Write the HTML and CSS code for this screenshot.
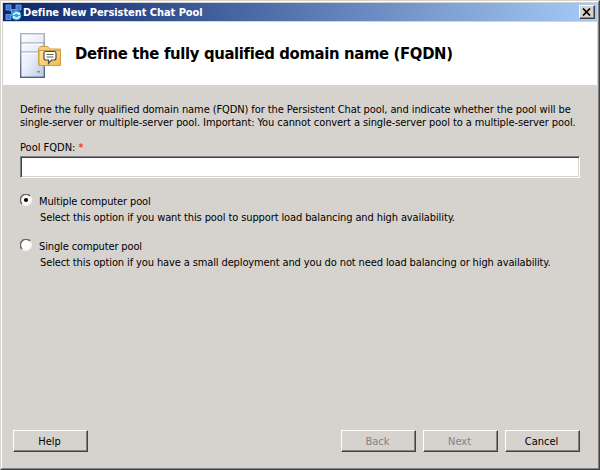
FILE: index.html
```html
<!DOCTYPE html>
<html lang="en">
<head>
<meta charset="utf-8">
<title>Define New Persistent Chat Pool</title>
<link rel="stylesheet" href="styles.css">
</head>
<body>
<div class="window"><div class="frame">
  <div class="titlebar">
    <svg class="app-icon" width="17" height="17" viewBox="0 0 17 17">
      <path d="M3.500 4L8.500 9L13.500 4M8.500 9L3.500 13" fill="none" stroke="#5d9ae6" stroke-width="1.600"/>
      <g fill="#4378d2" stroke="#6da5ee" stroke-width=".8">
        <rect x="1" y="1" width="5" height="5"/><rect x="11" y="1" width="5" height="5"/><rect x="1" y="10.500" width="5" height="5"/>
        <rect x="6.500" y="5.500" width="4" height="4"/>
      </g>
      <circle cx="11.500" cy="11.500" r="4.900" fill="#2fa6dc"/>
      <path d="M8.500 11A3.100 3.100 0 0 1 13.500 9.500M14.500 12A3.100 3.100 0 0 1 9.500 13.500" fill="none" stroke="#fff" stroke-width="1.500"/>
      <path d="M12.300 10.800H15V8ZM10.700 12.300H8V15Z" fill="#fff"/>
    </svg>
    <span class="title">Define New Persistent Chat Pool</span>
    <button class="close" aria-label="Close"><svg width="9" height="8" viewBox="0 0 9 8"><path d="M1 .5L8 7.500M8 .5L1 7.500" stroke="#000" stroke-width="1.700"/></svg></button>
  </div>
  <header class="header">
    <svg class="server-icon" width="43" height="47" viewBox="0 0 43 47">
      <defs>
        <linearGradient id="server" x1="0" y1="0" x2="1" y2="1"><stop offset="0" stop-color="#fff"/><stop offset=".5" stop-color="#e9eefb"/><stop offset="1" stop-color="#b9c6e8"/></linearGradient>
        <linearGradient id="edge" x1="0" y1="0" x2="0" y2="1"><stop offset="0" stop-color="#adb3c1"/><stop offset="1" stop-color="#53627c"/></linearGradient>
        <linearGradient id="folder" x1="0" y1="0" x2="1" y2="1"><stop offset="0" stop-color="#ffe7a2"/><stop offset="1" stop-color="#eeba50"/></linearGradient>
      </defs>
      <rect x=".7" y="1.700" width="23.600" height="43.600" fill="url(#server)" stroke="url(#edge)" stroke-width="1.400"/>
      <path d="M1 11H24M1 20H24" stroke="#8c98ac" stroke-width="1.200"/>
      <path d="M2 12.200H23M2 21.200H23" stroke="#fff"/>
      <rect x="17" y="39" width="3" height="1.500" rx=".5" fill="#15df25"/>
      <path d="M18.500 33V17L20.500 14.500H28L30 17H40.500V33Z" fill="#f5ce7b" stroke="#d6a24b"/>
      <path d="M19 18.500H40.500V33.500H19Z" fill="url(#folder)" stroke="#cf9c42"/>
      <path d="M25.500 19.500H34.500Q36 19.500 36 21V26Q36 28 34 28H31.500L28.500 31.500V28H26Q24 28 24 26V21Q24 19.500 25.500 19.500Z" fill="#fff" stroke="#4d4a43" stroke-width="1.200"/>
      <path d="M26.500 22.500H33.500M26.500 25H33.500" stroke="#66635d"/>
    </svg>
    <h1>Define the fully qualified domain name (FQDN)</h1>
  </header>
  <main class="content">
    <p class="intro"><span class="intro-first">Define the fully qualified domain name (FQDN) for the Persistent Chat pool, and indicate whether the pool will be</span><br><span class="intro-second">single-server or multiple-server pool. Important: You cannot convert a single-server pool to a multiple-server pool.</span></p>
    <label class="field-label" for="fqdn">Pool FQDN: <span class="required">*</span></label>
    <input class="field" id="fqdn" type="text">
    <div class="option">
      <svg class="radio" width="12" height="12" viewBox="0 0 12 12"><circle cx="6" cy="6" r="5" fill="#fff"/><path d="M2 10A5.400 5.400 0 0 1 10 2" fill="none" stroke="#666" stroke-width="1.500"/><path d="M10 2A5.400 5.400 0 0 1 2 10" fill="none" stroke="#f7f5f2"/><circle cx="6" cy="6" r="2.100"/></svg>
      <div><div class="name">Multiple computer pool</div><div class="description load">Select this option if you want this pool to support load balancing and high availability.</div></div>
    </div>
    <div class="option">
      <svg class="radio" width="12" height="12" viewBox="0 0 12 12"><circle cx="6" cy="6" r="5" fill="#fff"/><path d="M2 10A5.400 5.400 0 0 1 10 2" fill="none" stroke="#666" stroke-width="1.500"/><path d="M10 2A5.400 5.400 0 0 1 2 10" fill="none" stroke="#f7f5f2"/></svg>
      <div><div class="name">Single computer pool</div><div class="description small">Select this option if you have a small deployment and you do not need load balancing or high availability.</div></div>
    </div>
  </main>
  <footer class="actions">
    <button class="button help">Help</button>
    <button class="button" disabled>Back</button>
    <button class="button" disabled>Next</button>
    <button class="button">Cancel</button>
  </footer>
</div></div>
</body>
</html>
```
FILE: styles.css
```css
* { box-sizing: border-box; }
body {
  margin: 0;
  font: 11px/13px "DejaVu Sans Condensed", "DejaVu Sans", sans-serif;
  font-stretch: condensed;
  color: #000;
}
.window {
  width: 600px;
  height: 470px;
  border: 1px solid;
  border-color: #d6d3ce #424142 #424142 #d6d3ce;
}
.frame {
  height: 100%;
  display: flex;
  flex-direction: column;
  padding: 1px;
  border: 1px solid;
  border-color: #fff #848284 #848284 #fff;
  background: #d6d3ce;
}
.titlebar {
  height: 18px;
  flex: none;
  display: flex;
  align-items: center;
  padding: 0 2px;
  background: linear-gradient(90deg, #0a246a, #a6cbf7);
}
.app-icon { flex: none; }
.title {
  margin-left: 1px;
  font-size: 11px;
  font-weight: bold;
  letter-spacing: -0.06px;
  color: #fff;
  white-space: nowrap;
}
.close {
  width: 16px;
  height: 14px;
  margin-left: auto;
  padding: 0 1px 1px 0;
  display: flex;
  align-items: center;
  justify-content: center;
  border: 1px solid;
  border-color: #fff #424142 #424142 #fff;
  box-shadow: inset -1px -1px #848284;
  background: #d6d3ce;
}
.header {
  height: 63px;
  flex: none;
  margin-top: 1px;
  padding: 0 17px;
  display: flex;
  align-items: center;
  background: #fff;
}
.server-icon { flex: none; margin-top: 4px; }
h1 {
  margin: 0 0 0 12px;
  font-size: 16.5px;
  line-height: 22px;
  letter-spacing: -0.34px;
  white-space: nowrap;
}
.content { flex: 1; padding: 18px 17px 0; white-space: nowrap; }
.intro { margin: 0 0 12px; }
.intro-first { letter-spacing: -0.095px; }
.intro-second { letter-spacing: -0.088px; }
.field-label { display: block; margin-bottom: 2px; }
.required { color: #f00; }
.field {
  display: block;
  width: 560px;
  height: 22px;
  margin-bottom: 17px;
  padding: 1px 3px;
  border: 1px solid;
  border-color: #848284 #fff #fff #848284;
  border-radius: 0;
  box-shadow: inset 1px 1px #424142, inset -1px -1px #d6d3ce;
  background: #fff;
}
.option { display: flex; gap: 7px; margin-bottom: 16px; }
.radio { flex: none; margin-top: -1px; }
.name { letter-spacing: -0.13px; }
.description { margin: 3px 0 0 1px; }
.load { letter-spacing: -0.11px; }
.small { letter-spacing: -0.12px; }
.actions { display: flex; gap: 7px; padding: 0 17px 15px 10px; }
.button {
  width: 75px;
  height: 22px;
  padding: 1px 2px 0 0;
  border: 1px solid;
  border-color: #fff #424142 #424142 #fff;
  border-radius: 0;
  box-shadow: inset -1px -1px #848284;
  background: #d6d3ce;
  font: inherit;
  color: #000;
}
.button:disabled { color: #848284; }
.help { margin-right: auto; }
```
